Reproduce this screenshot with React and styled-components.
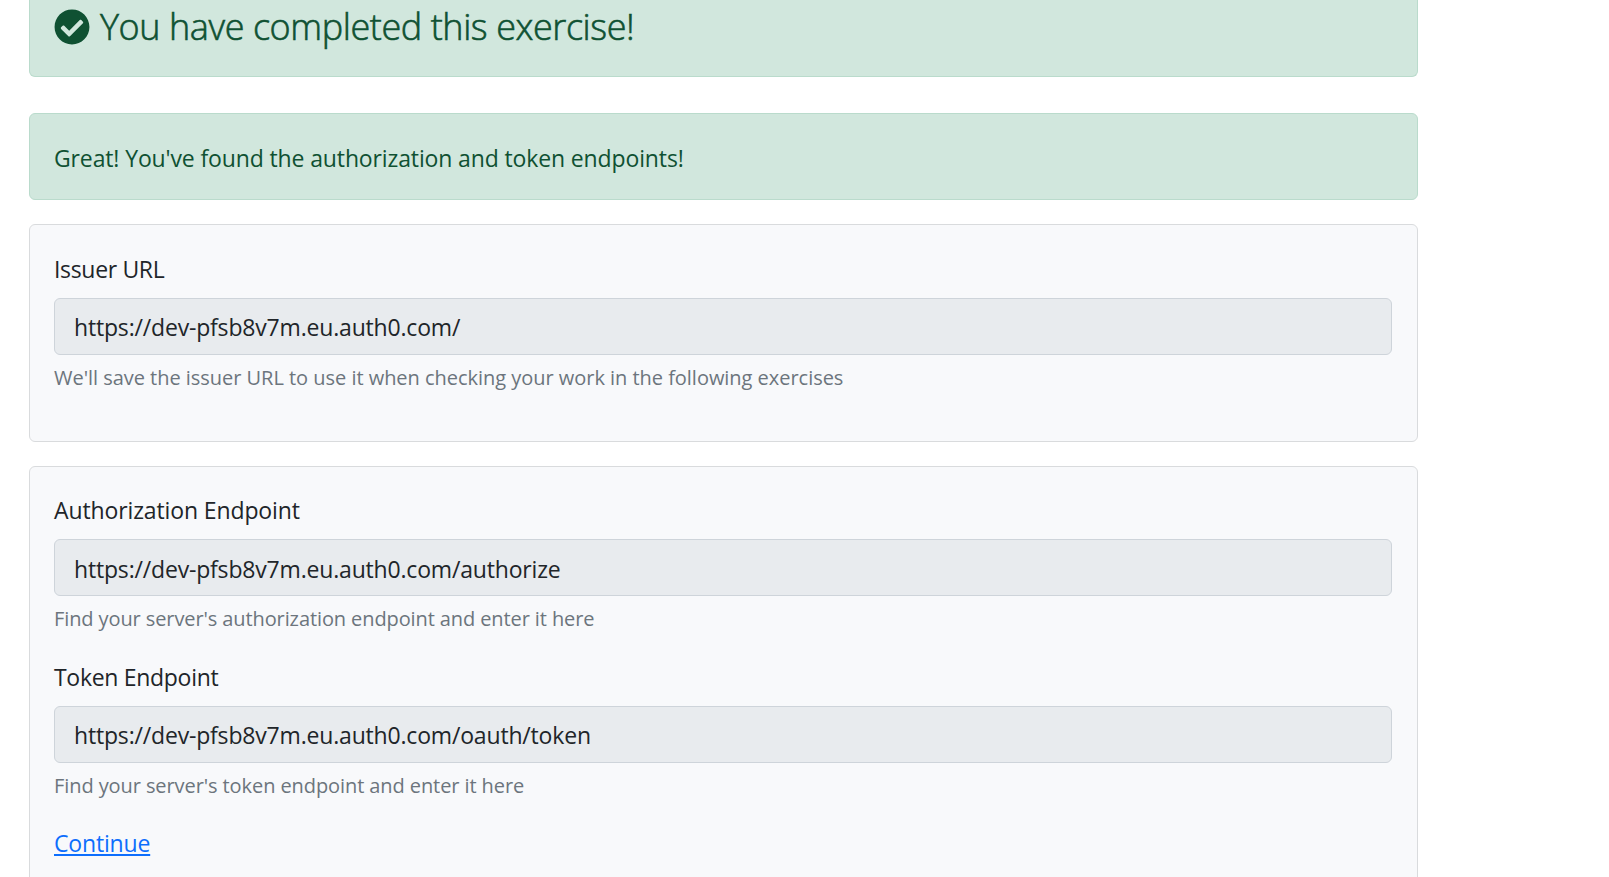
import React from 'react';
import styled, { createGlobalStyle } from 'styled-components';
import { FaCheckCircle } from 'react-icons/fa';

const GlobalStyle = createGlobalStyle`
  *, *::before, *::after { box-sizing: border-box; }
  html, body { margin: 0; height: 877px; overflow: hidden; background: #fff; }
  body {
    font-family: "Segoe UI", "Open Sans", "Noto Sans", sans-serif;
    font-size: 23px;
    line-height: 36px;
    color: #212529;
  }
`;

const Page = styled.main`
  width: 1389px;
  height: 877px;
  margin-left: 29px;
  overflow: hidden;
`;

const Banner = styled.header`
  display: flex;
  height: 77px;
  padding: 5px 24px 0 25px;
  margin-bottom: 36px;
  color: #0f5132;
  background: #d1e7dd;
  border: 1px solid #badbcc;
  border-top: 0;
  border-radius: 0 0 6px 6px;
`;

const CheckIcon = styled(FaCheckCircle)`
  flex: none;
  width: 36px;
  height: 36px;
  margin: 3.5px 10px 0 -1px;
`;

const Title = styled.h1`
  margin: 0;
  font-size: 36px;
  font-weight: 300;
  line-height: 44px;
  letter-spacing: -0.42px;
  -webkit-text-stroke: 0.6px currentColor;
  white-space: nowrap;
`;

const Alert = styled.section`
  height: 87px;
  padding: 26px 24px 23px;
  margin-bottom: 24px;
  color: #0f5132;
  letter-spacing: -0.13px;
  background: #d1e7dd;
  border: 1px solid #badbcc;
  border-radius: 6px;
`;

const Card = styled.section`
  padding: ${(p) => p.$top}px 25px 47px 24px;
  margin-bottom: 24px;
  background: #f8f9fb;
  border: 1px solid #d9dbdd;
  border-radius: 6px;
`;

const Field = styled.div`
  & + & { margin-top: 24px; }
`;

const Label = styled.div`
  margin-bottom: 11px;
  letter-spacing: ${(p) => p.$spacing}px;
`;

const Input = styled.div`
  height: 57px;
  padding: ${(p) => p.$inset}px 19px 0;
  letter-spacing: -0.18px;
  background: #e8ebee;
  border: 1px solid #ced4da;
  border-radius: 6px;
`;

const Help = styled.div`
  margin-top: 7px;
  font-size: 20px;
  line-height: 32px;
  letter-spacing: ${(p) => p.$spacing}px;
  color: #6c757d;
`;

const ContinueLink = styled.a`
  display: block;
  width: max-content;
  margin-top: 23px;
  letter-spacing: -0.17px;
  color: #0d6efd;
  text-decoration: underline;
  text-decoration-thickness: 2px;
  text-underline-offset: 2px;
  text-decoration-skip-ink: none;
`;

function EndpointField({ label, labelSpacing, value, inset = 10, help, helpSpacing }) {
  return (
    <Field>
      <Label $spacing={labelSpacing}>{label}</Label>
      <Input $inset={inset}>{value}</Input>
      <Help $spacing={helpSpacing}>{help}</Help>
    </Field>
  );
}

export default function App() {
  return (
    <>
      <GlobalStyle />
      <Page>
        <Banner>
          <CheckIcon />
          <Title>You have completed this exercise!</Title>
        </Banner>
        <Alert>Great! You've found the authorization and token endpoints!</Alert>
        <Card $top={26}>
          <EndpointField
            label="Issuer URL"
            labelSpacing={-0.33}
            value="https://dev-pfsb8v7m.eu.auth0.com/"
            help="We'll save the issuer URL to use it when checking your work in the following exercises"
            helpSpacing={-0.03}
          />
        </Card>
        <Card $top={25}>
          <EndpointField
            label="Authorization Endpoint"
            labelSpacing={-0.12}
            value="https://dev-pfsb8v7m.eu.auth0.com/authorize"
            inset={11}
            help="Find your server's authorization endpoint and enter it here"
            helpSpacing={-0.1}
          />
          <EndpointField
            label="Token Endpoint"
            labelSpacing={-0.3}
            value="https://dev-pfsb8v7m.eu.auth0.com/oauth/token"
            help="Find your server's token endpoint and enter it here"
            helpSpacing={-0.085}
          />
          <ContinueLink href="#continue">Continue</ContinueLink>
        </Card>
      </Page>
    </>
  );
}
